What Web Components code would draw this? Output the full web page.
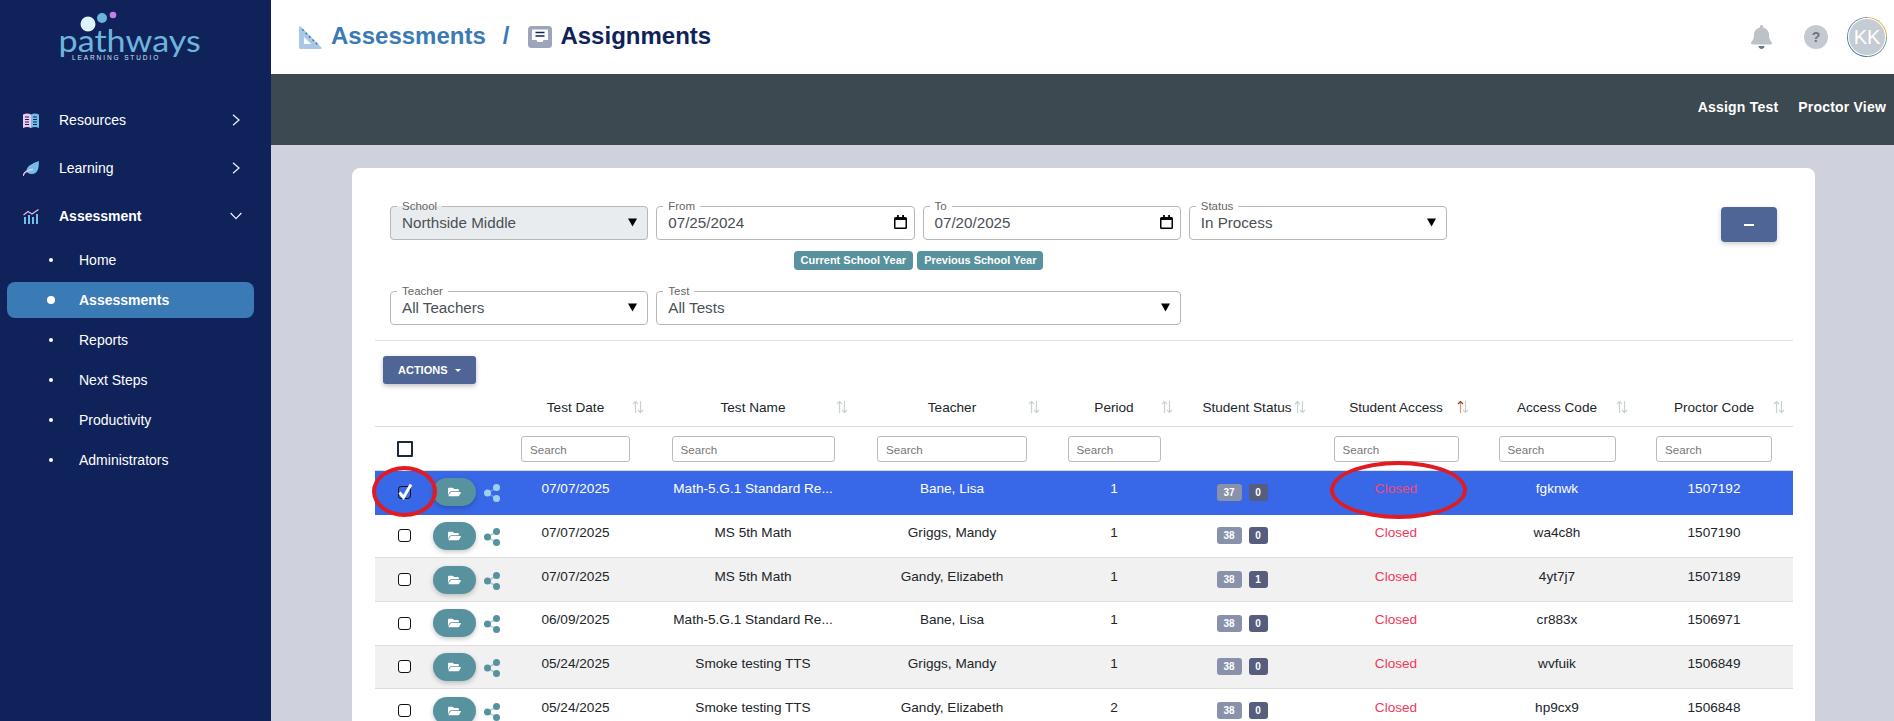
<!DOCTYPE html>
<html lang="en">
<head>
<meta charset="utf-8">
<title>Assignments</title>
<style>
    html, body { margin: 0; height: 721px; overflow: hidden; background: #cfd1dc; font-family: "Liberation Sans", Arial, sans-serif; }
</style>
</head>
<body>
<pw-app>
    <pw-sidebar slot="side">
        <pw-nav-item label="Resources" icon="book" chevron="right"></pw-nav-item>
        <pw-nav-item label="Learning" icon="leaf" chevron="right"></pw-nav-item>
        <pw-nav-item label="Assessment" icon="chart" chevron="down" bold></pw-nav-item>
        <pw-sub-item>Home</pw-sub-item>
        <pw-sub-item active>Assessments</pw-sub-item>
        <pw-sub-item>Reports</pw-sub-item>
        <pw-sub-item>Next Steps</pw-sub-item>
        <pw-sub-item>Productivity</pw-sub-item>
        <pw-sub-item>Administrators</pw-sub-item>
    </pw-sidebar>
    <pw-topbar></pw-topbar>
    <pw-actionbar></pw-actionbar>
    <pw-card>
        <pw-filters></pw-filters>
        <pw-actions-button></pw-actions-button>
        <pw-table></pw-table>
        <pw-oval style="left:20px;top:298px;width:65px;height:51px"></pw-oval>
        <pw-oval style="left:978px;top:293px;width:137px;height:58px"></pw-oval>
    </pw-card>
</pw-app>

<script>
const ICONS = {
    book: `<svg width="16" height="15" viewBox="0 0 16 15"><path d="M0 1.500C3 .3 5.500 .3 8 1.500V15C5.500 13.800 3 13.800 0 15z" fill="#f0c8ee"/><path d="M8 1.500C10.500 .3 13 .3 16 1.500V15C13 13.800 10.500 13.800 8 15z" fill="#74bde6"/><path d="M2 4h4M2 6.500h4M2 9h4M2 11.500h4M10 4h4M10 6.500h4M10 9h4M10 11.500h4" stroke="#10225a" stroke-width="1.200"/></svg>`,
    leaf: `<svg width="16" height="15" viewBox="0 0 16 15"><path d="M16 0C15.500 3 16.500 9 12.500 12C9.500 14 6 13 3.500 11C3 5.500 8 3 16 0z" fill="#74bde6"/><path d="M0 15C1 11 4 9 10 8.500" fill="none" stroke="#f0c8ee" stroke-width="1.300"/></svg>`,
    chart: `<svg width="16" height="15" viewBox="0 0 16 15"><path d="M.5 6L5 2.500 9 5 15.500 .5" fill="none" stroke="#e6b6e8" stroke-width="1.300"/><path d="M1 8h2v7H1zM5 6h2v9H5zM9 8h2v7H9zM13 5h2v10h-2z" fill="#74bde6"/></svg>`,
    right: `<svg width="8" height="12" viewBox="0 0 8 12"><path d="M1 .8L7 6 1 11.200" fill="none" stroke="#e8ecf4" stroke-width="1.300"/></svg>`,
    down: `<svg width="12" height="8" viewBox="0 0 12 8"><path d="M.6 1l5.400 5.600L11.400 1" fill="none" stroke="#e8ecf4" stroke-width="1.300"/></svg>`,
    folder: `<svg width="13" height="12" viewBox="0 0 576 512"><path fill="#fff" d="M572.694 292.093L500.27 416.248A63.997 63.997 0 0 1 444.989 448H45.025c-18.523 0-30.064-20.093-20.731-36.093l72.424-124.155A64 64 0 0 1 152 256h399.964c18.523 0 30.064 20.093 20.73 36.093zM152 224h328v-48c0-26.51-21.49-48-48-48H272l-64-64H48C21.49 64 0 85.49 0 112v278.046l69.077-118.418C86.214 242.25 117.989 224 152 224z"/></svg>`,
    bell: `<svg width="21" height="24" viewBox="0 0 448 512"><path fill="#bcc2c8" d="M439.39 362.290c-19.320-20.760-55.470-51.990-55.470-154.290 0-77.700-54.480-139.900-127.940-155.160V32c0-17.670-14.320-32-31.980-32s-31.980 14.330-31.980 32v20.840C118.560 68.100 64.080 130.300 64.080 208c0 102.300-36.150 133.530-55.470 154.290-6 6.450-8.660 14.160-8.610 21.710.11 16.400 12.980 32 32.100 32h383.800c19.120 0 32-15.600 32.100-32 .05-7.550-2.610-15.270-8.610-21.710z"/><path fill="#6b7680" d="M224 512c35.320 0 63.970-28.650 63.970-64H160.030c0 35.350 28.650 64 63.970 64z"/></svg>`,
    square: `<svg width="23" height="23" viewBox="0 0 23 23"><path d="M0 1.500C0 .3 .9 -.2 1.800 .7L22.300 21.200C23 22 22.600 23 21.500 23H1.500C.6 23 0 22.400 0 21.500z" fill="#a9c8e6"/><path d="M5 11L12 18H5z" fill="#fff"/><path d="M3.200 3.300l1.500 1.500M6.600 6.700l1.500 1.500M10 10.100l1.500 1.500M13.400 13.500l1.500 1.500M16.800 16.900l1.500 1.500" stroke="#3f7cb8" stroke-width="1.500"/></svg>`,
    inbox: `<svg width="24" height="22" viewBox="0 0 24 22"><rect width="24" height="22" rx="3.500" fill="#9da5bd"/><path d="M4 3.500h16v10.500h-4.500l-1 2h-5l-1-2H4z" fill="#fff"/><path d="M7.500 6.500h9M7.500 10h9" stroke="#10225a" stroke-width="1.600"/></svg>`,
    calendar: `<svg width="13" height="14" viewBox="0 0 13 14"><path d="M3 0h1.800v2h3.400V0H10v2h1.500A1.500 1.500 0 0 1 13 3.500v9a1.500 1.500 0 0 1-1.500 1.500h-10A1.500 1.500 0 0 1 0 12.500v-9A1.500 1.500 0 0 1 1.500 2H3zM1.500 5v7.500h10V5z" fill="#000"/></svg>`,
    arrow: `<svg width="9" height="9" viewBox="0 0 9 9"><path d="M0 .5h9L4.500 8.500z" fill="#000"/></svg>`,
    share: `<svg width="16" height="18" viewBox="0 0 16 18"><path d="M12.500 3.500L3.500 9l9 5.500" fill="none" stroke="currentColor" stroke-width="1.500" opacity=".4"/><circle cx="12.500" cy="3.500" r="3.500" fill="currentColor"/><circle cx="3.500" cy="9" r="3.500" fill="currentColor"/><circle cx="12.500" cy="14.500" r="3.500" fill="currentColor"/></svg>`
};

class PwApp extends HTMLElement {
    connectedCallback() {
        this.attachShadow({ mode: "open" }).innerHTML = `<style>
            :host { display: grid; grid-template-columns: 271px 1fr; grid-template-rows: 74px 71px 1fr; height: 721px; overflow: hidden; }
            ::slotted(pw-sidebar) { grid-row: 1 / 4; }
        </style><slot name="side"></slot><slot></slot>`;
    }
}

class PwSidebar extends HTMLElement {
    connectedCallback() {
        this.attachShadow({ mode: "open" }).innerHTML = `<style>
            :host { display: block; background: #10225a; color: #fff; }
            .logo { height: 96px; display: flex; flex-direction: column; align-items: center; position: relative; box-sizing: border-box; padding-top: 27px; }
            .dots { position: absolute; left: 78px; top: 10px; }
            .word { font: 400 31px/27px Lato, sans-serif; color: #6db5dc; transform: scaleX(1.1); margin-left: -11px; }
            .tag { align-self: flex-start; margin-left: 72px; font: 400 6.500px/7px "Liberation Sans", sans-serif; letter-spacing: 1.900px; color: #cfe3f0; }
        </style>
        <div class="logo">
            <svg class="dots" width="44" height="24" viewBox="0 0 44 24"><circle cx="10" cy="14" r="7.500" fill="#dff3fb"/><circle cx="24" cy="8" r="5" fill="#6bb4dc"/><circle cx="35" cy="5" r="3.300" fill="#c77dec"/></svg>
            <div class="word">pathways</div>
            <div class="tag">LEARNING STUDIO</div>
        </div>
        <slot></slot>`;
    }
}

class PwNavItem extends HTMLElement {
    connectedCallback() {
        const bold = this.hasAttribute("bold");
        this.attachShadow({ mode: "open" }).innerHTML = `<style>
            :host { display: flex; align-items: center; height: 48px; padding-left: 23px; font-size: 14px; }
            .label { margin-left: 20px; flex: 1; font-weight: ${bold ? 700 : 400}; }
            .chev { width: 12px; margin-right: 29px; display: flex; justify-content: center; }
            .ico { display: flex; }
        </style>
        <span class="ico">${ICONS[this.getAttribute("icon")]}</span>
        <span class="label">${this.getAttribute("label")}</span>
        <span class="chev">${ICONS[this.getAttribute("chevron")]}</span>`;
    }
}

class PwSubItem extends HTMLElement {
    connectedCallback() {
        const active = this.hasAttribute("active");
        this.attachShadow({ mode: "open" }).innerHTML = `<style>
            :host { display: block; height: 40px; padding: 2px 17px 2px 7px; box-sizing: border-box; font-size: 14px; }
            .pill { height: 36px; display: flex; align-items: center; border-radius: 8px; background: ${active ? "#3a7ab5" : "transparent"}; font-weight: ${active ? 700 : 400}; }
            .dot { width: ${active ? 8 : 4}px; height: ${active ? 8 : 4}px; border-radius: 50%; background: #fff; margin-left: ${active ? 40 : 42}px; margin-right: ${active ? 24 : 26}px; }
        </style><div class="pill"><span class="dot"></span><slot></slot></div>`;
    }
}

class PwTopbar extends HTMLElement {
    connectedCallback() {
        this.attachShadow({ mode: "open" }).innerHTML = `<style>
            :host { display: flex; align-items: center; background: #fff; padding: 0 7px 0 28px; }
            .crumb { display: flex; align-items: center; font-size: 24px; font-weight: 700; flex: 1; }
            .a { color: #3a7ab5; margin-left: 9px; padding-bottom: 2px; }
            .sep { color: #3a7ab5; margin: 0 19px 0 17px; padding-bottom: 2px; }
            .b { color: #10225a; margin-left: 8px; padding-bottom: 2px; }
            .crumb svg { display: block; }
            .bell { display: flex; margin-right: 32px; }
            .help { width: 24px; height: 24px; border-radius: 50%; background: #c5cad0; color: #6b7680; font-size: 14px; font-weight: 700; display: flex; align-items: center; justify-content: center; margin-right: 19px; }
            .avatar { width: 40px; height: 40px; box-sizing: border-box; border-radius: 50%; padding: 1px; background: conic-gradient(#e3b34a 0 25%, #6f9f8a 25% 50%, #3a7ab5 50% 75%, #6f8fb0 75%); }
            .avatar span { display: flex; width: 100%; height: 100%; align-items: center; justify-content: center; border-radius: 50%; background: #c5ccd4; color: #fff; font-size: 20px; box-shadow: inset 0 0 0 1px #fff; }
        </style>
        <div class="crumb">
            ${ICONS.square}<span class="a">Assessments</span><span class="sep">/</span>${ICONS.inbox}<span class="b">Assignments</span>
        </div>
        <span class="bell">${ICONS.bell}</span>
        <span class="help">?</span>
        <span class="avatar"><span>KK</span></span>`;
    }
}

class PwActionbar extends HTMLElement {
    connectedCallback() {
        this.attachShadow({ mode: "open" }).innerHTML = `<style>
            :host { display: flex; justify-content: flex-end; align-items: center; gap: 20px; background: #3c4950; color: #fff; padding: 0 8px 6px 0; font-size: 14px; font-weight: 700; letter-spacing: .2px; }
        </style><span>Assign Test</span><span>Proctor View</span>`;
    }
}

class PwCard extends HTMLElement {
    connectedCallback() {
        this.attachShadow({ mode: "open" }).innerHTML = `<style>
            :host { display: block; position: relative; background: #fff; border-radius: 8px 8px 0 0; margin: 23px 79px 0 81px; padding: 32px 22px 0 23px; }
        </style><slot></slot>`;
    }
}

class PwField extends HTMLElement {
    connectedCallback() {
        const kind = this.getAttribute("kind") || "select";
        this.attachShadow({ mode: "open" }).innerHTML = `<style>
            :host { display: block; }
            fieldset { margin: 0; padding: 0 10px 0 11px; height: 40px; box-sizing: border-box; border: 1px solid #b8b8b8; border-radius: 4px; background: ${this.hasAttribute("disabled") ? "#e9ecef" : "#fff"}; min-width: 0; }
            legend { padding: 0 5px; margin-left: -5px; font-size: 11.500px; line-height: 12px; color: #666; }
            .row { display: flex; justify-content: space-between; align-items: center; height: 20px; padding-bottom: 2px; font-size: 15.200px; color: #495057; }
            .ico { display: flex; margin-right: ${kind === "date" ? -3 : 0}px; }
        </style>
        <fieldset>
            <legend>${this.getAttribute("label")}</legend>
            <div class="row"><span>${this.getAttribute("value")}</span><span class="ico">${kind === "date" ? ICONS.calendar : ICONS.arrow}</span></div>
        </fieldset>`;
    }
}

class PwFilters extends HTMLElement {
    connectedCallback() {
        this.attachShadow({ mode: "open" }).innerHTML = `<style>
            :host { display: flex; justify-content: space-between; padding: 0 15px 15px; border-bottom: 1px solid #e0e0e0; }
            .grid { display: grid; width: 1057px; grid-template-columns: repeat(4, 1fr); column-gap: 8px; }
            .tags { grid-column: 2 / 4; display: flex; justify-content: center; gap: 4px; margin: 11px 0 15px; }
            .tag { height: 19px; padding: 0 7px; border-radius: 4px; background: #57929e; color: #fff; font-size: 11px; font-weight: 700; line-height: 19px; }
            .test { grid-column: 2 / 4; }
            .minus { width: 56px; height: 35px; margin: 7px 1px 0 0; border-radius: 4px; background: #4f6596; box-shadow: 0 2px 5px rgba(0,0,0,.2); display: flex; align-items: center; justify-content: center; }
            .minus i { width: 10px; height: 2px; background: #fff; }
        </style>
        <div class="grid">
            <pw-field label="School" value="Northside Middle" disabled></pw-field>
            <pw-field label="From" value="07/25/2024" kind="date"></pw-field>
            <pw-field label="To" value="07/20/2025" kind="date"></pw-field>
            <pw-field label="Status" value="In Process"></pw-field>
            <div class="tags"><span class="tag">Current School Year</span><span class="tag">Previous School Year</span></div>
            <pw-field style="grid-row:3" label="Teacher" value="All Teachers"></pw-field>
            <pw-field style="grid-row:3" class="test" label="Test" value="All Tests"></pw-field>
        </div>
        <div class="minus"><i></i></div>`;
    }
}

class PwActionsButton extends HTMLElement {
    connectedCallback() {
        this.attachShadow({ mode: "open" }).innerHTML = `<style>
            :host { display: flex; align-items: center; gap: 7px; width: 93px; box-sizing: border-box; height: 28px; margin: 15px 0 6px 8px; padding-left: 15px; border-radius: 3px; background: #4f6596; color: #fff; font-size: 11px; font-weight: 700; box-shadow: 0 2px 5px rgba(0,0,0,.25); }
            i { border: 3px solid transparent; border-top-color: #fff; border-bottom: 0; }
        </style>ACTIONS<i></i>`;
    }
}

const COLS = "117px 167px 188px 210px 114px 142px 166px 156px 158px";

class PwTable extends HTMLElement {
    connectedCallback() {
        const heads = [
            ["Test Date", 15], ["Test Name", -1], ["Teacher", 17], ["Period", -2],
            ["Student Status", 7, 10], ["Student Access", 10, 0, true], ["Access Code", 7], ["Proctor Code", 8]
        ];
        const searches = [109, 163, 150, 93, 0, 125, 117, 116];
        const rows = [
            ["07/07/2025", "Math-5.G.1 Standard Re...", "Bane, Lisa", "1", "37", "0", "fgknwk", "1507192"],
            ["07/07/2025", "MS 5th Math", "Griggs, Mandy", "1", "38", "0", "wa4c8h", "1507190"],
            ["07/07/2025", "MS 5th Math", "Gandy, Elizabeth", "1", "38", "1", "4yt7j7", "1507189"],
            ["06/09/2025", "Math-5.G.1 Standard Re...", "Bane, Lisa", "1", "38", "0", "cr883x", "1506971"],
            ["05/24/2025", "Smoke testing TTS", "Griggs, Mandy", "1", "38", "0", "wvfuik", "1506849"],
            ["05/24/2025", "Smoke testing TTS", "Gandy, Elizabeth", "2", "38", "0", "hp9cx9", "1506848"]
        ];
        const sort = active => `<path d="M3.500 13V1.500" fill="none" stroke="${active ? "#e0946c" : "#c8d0d4"}" stroke-width="1.200"/><path d="M1 4L3.500 1.500 6 4" fill="none" stroke="${active ? "#8a3a22" : "#c8d0d4"}" stroke-width="1.200"/><path d="M8.500 1v11.500M6 10l2.500 2.500L11 10" fill="none" stroke="#c8d0d4" stroke-width="1.200"/>`;
        this.attachShadow({ mode: "open" }).innerHTML = `<style>
            :host { display: block; font-size: 13.600px; color: #212529; }
            .head, .filter, .row { display: grid; grid-template-columns: ${COLS}; }
            .head { height: 37px; border-bottom: 1px solid #ddd; align-items: center; box-sizing: border-box; padding-bottom: 2px; }
            .th { display: grid; grid-template-columns: 1fr auto 1fr; align-items: center; white-space: nowrap; }
            .th span { grid-column: 2; }
            .th svg { grid-column: 3; justify-self: end; }
            .filter { height: 44px; align-items: center; border-bottom: 1px solid #ddd; box-sizing: border-box; padding-top: 1px; }
            .filter div { display: flex; justify-content: center; }
            input { height: 26px; box-sizing: border-box; border: 1px solid #bbb; border-radius: 3px; padding: 0 0 0 8px; font: 11.600px "Liberation Sans", sans-serif; outline: none; min-width: 0; }
            input::placeholder { color: #777; opacity: 1; }
            .filter .allcell { justify-content: flex-start; padding-left: 22px; }
            .all { width: 16px; height: 16px; box-sizing: border-box; border: 2px solid #1a2a3a; border-radius: 1px; }
            .row { height: 43.670px; box-sizing: border-box; border-bottom: 1px solid #ddd; align-items: center; text-align: center; }
            .row.stripe { background: #f1f1f1; }
            .row.sel { background: #3868e8; color: #fff; --share: #9fd0ea; --box: transparent; --closed: #f04a7c; border-bottom-color: #3868e8; }
            .row > span { padding-bottom: 7px; }
            .ctl { display: flex; align-items: center; padding-left: 23px; padding-bottom: 0 !important; color: var(--share, #57929e); }
            .ctl > span { flex: none; }
            .box { width: 13px; height: 13px; box-sizing: border-box; border: 1px solid #111; border-radius: 3px; background: var(--box, #fff); margin-right: 22px; position: relative; }
            .check { position: absolute; left: -1px; top: -4px; }
            .btn { width: 43px; height: 28px; border-radius: 14px; background: #57929e; box-shadow: 0 2px 5px rgba(0,0,0,.22); display: flex; align-items: center; justify-content: center; margin-right: 8px; }
            .btn svg, .share svg { display: block; }
            .share { margin-top: 2px; }
            .closed { color: var(--closed, #f2385a); }
            .badges { display: flex; justify-content: center; gap: 7px; padding-bottom: 0 !important; }
            .badges b { height: 17px; border-radius: 3px; color: #fff; font-size: 10px; line-height: 17px; text-align: center; }
            .b1 { width: 25px; background: #8a91ab; }
            .b2 { width: 19px; background: #575d7c; }
        </style>
        <div class="head">
            <span></span>
            ${heads.map(([t, off, shift, on]) => `<div class="th"><span style="margin-left:${shift || 0}px">${t}</span><svg style="margin-right:${off}px" width="12" height="14" viewBox="0 0 12 14">${sort(on)}</svg></div>`).join("")}
        </div>
        <div class="filter">
            <div class="allcell"><span class="all"></span></div>
            ${searches.map(w => `<div>${w ? `<input style="width:${w}px" placeholder="Search">` : ""}</div>`).join("")}
        </div>
        ${rows.map((r, i) => `<div class="row ${i === 0 ? "sel" : ""} ${i === 2 || i === 4 ? "stripe" : ""}">
            <span class="ctl"><span class="box">${i === 0 ? `<svg class="check" width="15" height="17" viewBox="0 0 15 17"><path d="M1.500 9.500L5.500 14.500 13 1.500" fill="none" stroke="#fff" stroke-width="3"/></svg>` : ""}</span><span class="btn">${ICONS.folder}</span><span class="share">${ICONS.share}</span></span>
            <span>${r[0]}</span><span>${r[1]}</span><span>${r[2]}</span><span>${r[3]}</span>
            <span class="badges"><b class="b1">${r[4]}</b><b class="b2">${r[5]}</b></span>
            <span class="closed">Closed</span><span>${r[6]}</span><span>${r[7]}</span>
        </div>`).join("")}`;
    }
}

class PwOval extends HTMLElement {
    connectedCallback() {
        this.attachShadow({ mode: "open" }).innerHTML = `<style>
            :host { display: block; position: absolute; box-sizing: border-box; border: 4px solid #e01b22; border-radius: 50%; }
        </style>`;
    }
}

customElements.define("pw-app", PwApp);
customElements.define("pw-sidebar", PwSidebar);
customElements.define("pw-nav-item", PwNavItem);
customElements.define("pw-sub-item", PwSubItem);
customElements.define("pw-topbar", PwTopbar);
customElements.define("pw-actionbar", PwActionbar);
customElements.define("pw-card", PwCard);
customElements.define("pw-field", PwField);
customElements.define("pw-filters", PwFilters);
customElements.define("pw-actions-button", PwActionsButton);
customElements.define("pw-table", PwTable);
customElements.define("pw-oval", PwOval);
</script>
</body>
</html>
